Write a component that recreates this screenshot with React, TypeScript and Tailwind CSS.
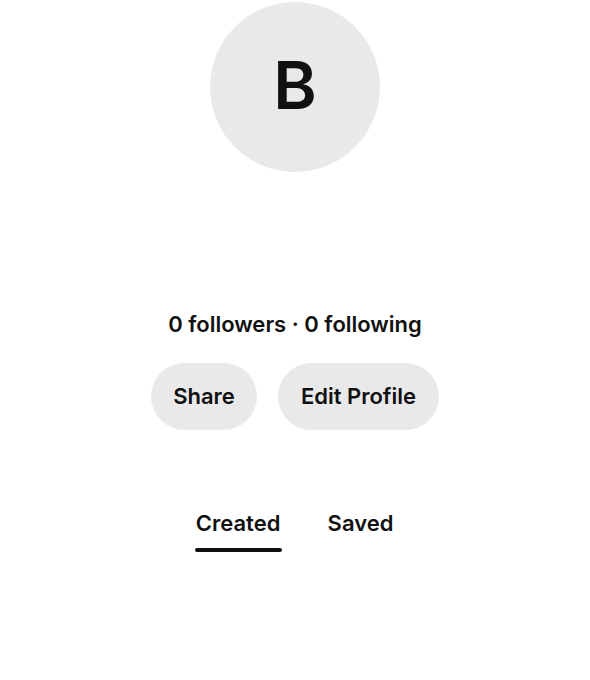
import React from "react";

export default function App() {
  return (
    <div
      className="w-[590px] h-[680px] bg-white flex flex-col items-center text-[#111111]"
      style={{ fontFamily: "Inter, 'Noto Sans', sans-serif" }}
    >
      <div className="mt-[2px] w-[170px] h-[170px] rounded-full bg-[#e9e9e9] flex items-center justify-center">
        <span className="text-[66px] leading-none font-semibold -mt-[4px]">B</span>
      </div>
      <div className="mt-[138px] text-[22px] leading-[28px] font-semibold">
        0 followers · 0 following
      </div>
      <div className="mt-[25px] flex gap-[21px]">
        <button className="w-[106px] h-[67px] rounded-full bg-[#e9e9e9] text-[22px] font-semibold">
          Share
        </button>
        <button className="w-[161px] h-[67px] rounded-full bg-[#e9e9e9] text-[22px] font-semibold">
          Edit Profile
        </button>
      </div>
      <div className="mt-[79px] flex gap-[46px] -ml-[2px]">
        <div className="flex flex-col items-center">
          <span className="text-[22px] leading-[28px] font-semibold">Created</span>
          <div className="mt-[11px] w-[87px] h-[4px] rounded-full bg-[#111111]" />
        </div>
        <span className="text-[22px] leading-[28px] font-semibold">Saved</span>
      </div>
    </div>
  );
}
